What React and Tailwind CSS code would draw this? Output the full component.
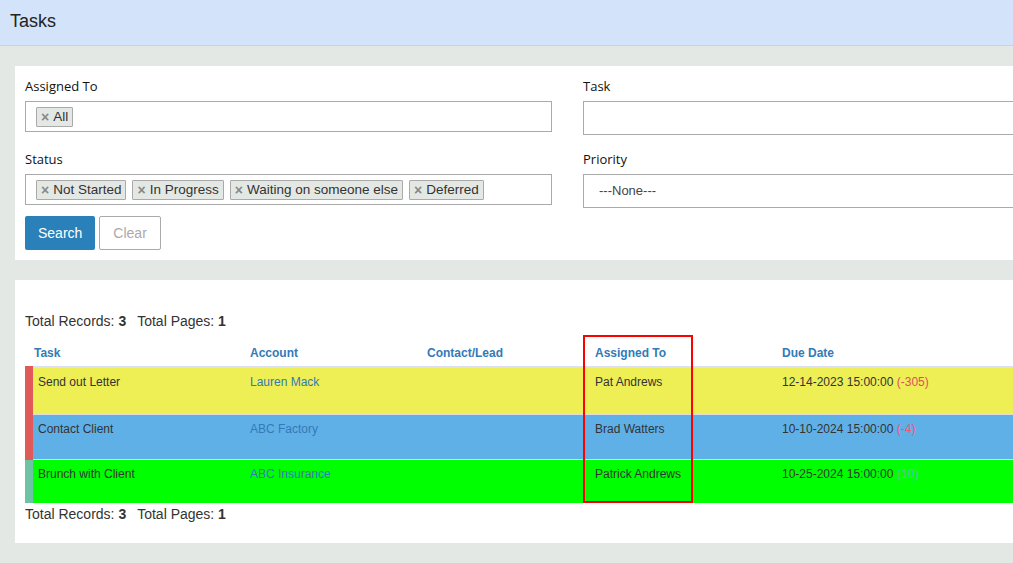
import React from 'react';

const arial = { fontFamily: '"Liberation Sans", Arial, sans-serif' };

const Tag = ({ label }) => (
  <span className="inline-flex items-center h-[20px] px-[4px] mr-[6px] border border-[#aaaaaa] bg-[#e4e8e4] text-[13.5px] text-[#333] leading-none rounded-[1px]">
    <span className="text-[#888] font-bold text-[14px] mr-[4px]">×</span>
    {label}
  </span>
);

const Label = ({ children }) => (
  <div className="text-[13px] font-medium text-[#111] leading-[18px] mb-[6px]" style={{ fontFamily: '"Open Sans", sans-serif' }}>
    {children}
  </div>
);

const rows = [
  { task: 'Send out Letter', account: 'Lauren Mack', assigned: 'Pat Andrews', due: '12-14-2023 15:00:00', diff: '(-305)', diffColor: 'text-[#e0505a]', bg: 'bg-[#eeee55]', strip: 'border-l-[#e05a5a]', h: 'h-[47px]' },
  { task: 'Contact Client', account: 'ABC Factory', assigned: 'Brad Watters', due: '10-10-2024 15:00:00', diff: '(-4)', diffColor: 'text-[#e85a78]', bg: 'bg-[#60b0e8]', strip: 'border-l-[#e05a5a]', h: 'h-[45px]' },
  { task: 'Brunch with Client', account: 'ABC Insurance', assigned: 'Patrick Andrews', due: '10-25-2024 15:00:00', diff: '(10)', diffColor: 'text-[#5ec4a0]', bg: 'bg-[#00ff00]', strip: 'border-l-[#6cc4a4]', h: 'h-[44px]' },
];

const Totals = () => (
  <div className="text-[14px] text-[#333]" style={arial}>
    Total Records: <b>3</b>
    <span className="ml-[11px]">Total Pages: </span><b>1</b>
  </div>
);

export default function App() {
  return (
    <div className="w-[1013px] h-[563px] overflow-hidden bg-[#e3e8e4]" style={arial}>
      <div className="w-[1130px]">
        <div className="h-[46px] bg-[#d2e3fa] border-b border-[#c6d3e2] flex items-start pl-[10px] pt-[8px]">
          <span className="text-[18px] text-[#222]">Tasks</span>
        </div>

        <div className="ml-[15px] mt-[20px] bg-white pt-[11px] pb-[10px] px-[10px]">
          <div className="grid grid-cols-[527px_527px] gap-x-[31px]">
            <div>
              <Label>Assigned To</Label>
              <div className="h-[31px] border border-[#aaaaaa] flex items-center pl-[10px]">
                <Tag label="All" />
              </div>
            </div>
            <div>
              <Label>Task</Label>
              <div className="h-[34px] border border-[#aaaaaa]" />
            </div>
            <div className="mt-[15px]">
              <Label>Status</Label>
              <div className="h-[31px] border border-[#aaaaaa] flex items-center pl-[10px]">
                <Tag label="Not Started" />
                <Tag label="In Progress" />
                <Tag label="Waiting on someone else" />
                <Tag label="Deferred" />
              </div>
            </div>
            <div className="mt-[15px]">
              <Label>Priority</Label>
              <div className="h-[34px] border border-[#aaaaaa] flex items-center pl-[15px] text-[13px] text-[#444]">
                ---None---
              </div>
            </div>
          </div>
          <div className="flex gap-[4px] mt-[8px]">
            <button className="h-[34px] px-[13px] bg-[#2a80b9] text-white text-[14px] rounded-[2px]">Search</button>
            <button className="h-[34px] px-[13px] bg-white border border-[#aaaaaa] text-[#aaaaaa] text-[14px] rounded-[2px]">Clear</button>
          </div>
        </div>

        <div className="ml-[15px] mt-[20px] bg-white pt-[31px] pb-[21px] px-[10px] h-[263px]">
          <Totals />
          <div className="relative mt-[2px]">
            <table className="table-fixed border-collapse w-[1080px] text-[12px]">
              <colgroup>
                <col className="w-[213px]" />
                <col className="w-[177px]" />
                <col className="w-[168px]" />
                <col className="w-[187px]" />
                <col />
              </colgroup>
              <thead>
                <tr className="h-[33px] border-b-[2px] border-[#dde0ee]">
                  <th className="text-left font-bold text-[#337ab7] pl-[5px] pt-[6px]">Task</th>
                  <th className="text-left font-bold text-[#337ab7] pl-[8px] pt-[6px]">Account</th>
                  <th className="text-left font-bold text-[#337ab7] pl-[8px] pt-[6px]">Contact/Lead</th>
                  <th className="text-left font-bold text-[#337ab7] pl-[8px] pt-[6px]">Assigned To</th>
                  <th className="text-left font-bold text-[#337ab7] pl-[8px] pt-[6px]">Due Date</th>
                </tr>
              </thead>
              <tbody>
                {rows.map((r, i) => (
                  <tr key={i} className={`${r.bg} ${r.h} ${i < rows.length - 1 ? 'border-b border-[#dddddd]' : ''}`}>
                    <td className={`align-top border-l-[8px] ${r.strip} pl-[5px] pt-[5px] text-[#333]`}>{r.task}</td>
                    <td className="align-top pl-[8px] pt-[5px] text-[#337ab7]">{r.account}</td>
                    <td className="align-top pl-[8px] pt-[5px]"></td>
                    <td className="align-top pl-[8px] pt-[5px] text-[#333]">{r.assigned}</td>
                    <td className="align-top pl-[8px] pt-[5px] text-[#333]">
                      {r.due} <span className={r.diffColor}>{r.diff}</span>
                    </td>
                  </tr>
                ))}
              </tbody>
            </table>
            <div className="absolute left-[558px] top-[1px] w-[110px] h-[168px] border-2 border-[#ff0000] pointer-events-none" />
          </div>
          <div className="mt-[1px]">
            <Totals />
          </div>
        </div>
      </div>
    </div>
  );
}
